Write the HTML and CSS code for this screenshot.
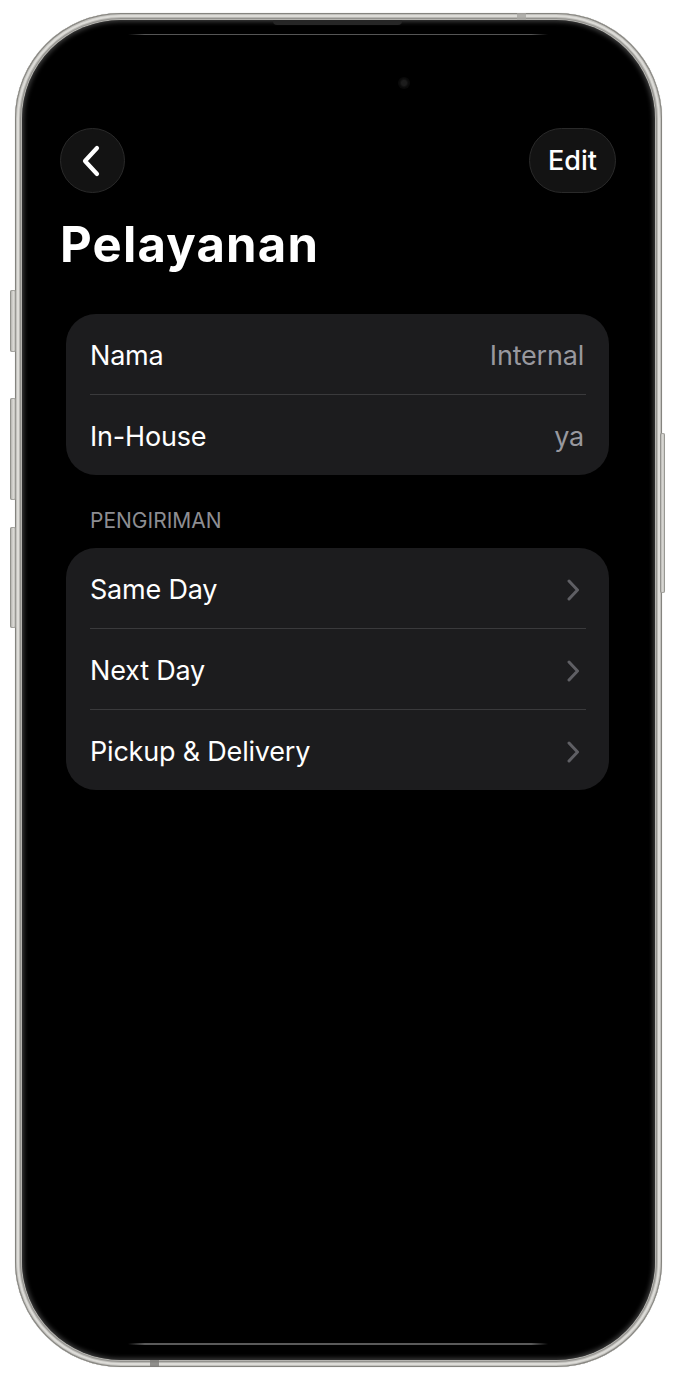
FILE: index.html
```html
<!DOCTYPE html>
<html lang="id">
<head>
<meta charset="utf-8">
<title>Pelayanan</title>
<link rel="stylesheet" href="styles.css">
</head>
<body>
<div class="phone">
  <span class="btn-side btn-action"></span>
  <span class="btn-side btn-vol-up"></span>
  <span class="btn-side btn-vol-down"></span>
  <span class="btn-side btn-power"></span>
  <span class="notch"></span>
  <span class="band band-top"></span>
  <span class="band band-bottom"></span>
  <div class="screen">
    <span class="edge-line edge-top"></span>
    <span class="edge-line edge-bottom"></span>
    <span class="camera"></span>
    <nav class="nav">
      <button class="nav-btn back" aria-label="Kembali">
        <svg width="20" height="32" viewBox="0 0 20 32"><path d="M16 3 L4 16 L16 29" fill="none" stroke="#fff" stroke-width="4.2" stroke-linecap="round" stroke-linejoin="round"/></svg>
      </button>
      <button class="nav-btn edit">Edit</button>
    </nav>
    <h1 class="title">Pelayanan</h1>
    <section class="card">
      <div class="row"><span class="label">Nama</span><span class="value">Internal</span></div>
      <div class="row"><span class="label">In-House</span><span class="value">ya</span></div>
    </section>
    <h2 class="section-header">PENGIRIMAN</h2>
    <section class="card">
      <div class="row"><span class="label">Same Day</span><svg class="chev" width="14" height="22" viewBox="0 0 14 22"><path d="M3 2 L11.5 11 L3 20" fill="none" stroke="#5f5f64" stroke-width="3" stroke-linecap="round" stroke-linejoin="round"/></svg></div>
      <div class="row"><span class="label">Next Day</span><svg class="chev" width="14" height="22" viewBox="0 0 14 22"><path d="M3 2 L11.5 11 L3 20" fill="none" stroke="#5f5f64" stroke-width="3" stroke-linecap="round" stroke-linejoin="round"/></svg></div>
      <div class="row"><span class="label">Pickup &amp; Delivery</span><svg class="chev" width="14" height="22" viewBox="0 0 14 22"><path d="M3 2 L11.5 11 L3 20" fill="none" stroke="#5f5f64" stroke-width="3" stroke-linecap="round" stroke-linejoin="round"/></svg></div>
    </section>
  </div>
</div>
</body>
</html>
```
FILE: styles.css
```css
html, body {
  margin: 0;
  padding: 0;
  background: #ffffff;
}
body {
  width: 675px;
  height: 1380px;
  overflow: hidden;
  font-family: Inter, "Noto Sans", "Liberation Sans", sans-serif;
}
.phone {
  position: relative;
  box-sizing: border-box;
  margin: 13px 0 0 15px;
  width: 647px;
  height: 1354px;
  padding: 7px;
  border-radius: 106px;
  background: #b4b3af;
  box-shadow:
    inset 0 0 0 1px #85847f,
    inset 0 0 0 2px #c2c1bd,
    inset 0 0 0 4px #dddcd8,
    inset 0 0 0 5px #bab9b5,
    inset 0 0 0 6px #93928e,
    0 0 1px rgba(0,0,0,0.3);
}
.btn-side {
  position: absolute;
  width: 6px;
  background: linear-gradient(90deg, #a3a29e, #dcdbd7 55%, #afaeaa);
  border-radius: 2px;
  box-shadow: inset 0 0 0 1px rgba(125,125,120,0.55);
}
.btn-action { left: -5px; top: 277px; height: 62px; }
.btn-vol-up { left: -5px; top: 385px; height: 102px; }
.btn-vol-down { left: -5px; top: 514px; height: 101px; }
.btn-power { right: -3px; top: 420px; height: 160px; width: 5px; }
.notch {
  position: absolute;
  left: 258px;
  top: 7px;
  width: 129px;
  height: 5px;
  border-radius: 0 0 4px 4px;
  background: #262626;
  z-index: 2;
}
.band {
  position: absolute;
  width: 9px;
  height: 7px;
  background: #a6a5a1;
  opacity: 0.8;
}
.band-top { left: 502px; top: 0; }
.band-bottom { left: 135px; bottom: 0; background: #7d7c79; }
.screen {
  position: relative;
  box-sizing: border-box;
  height: 100%;
  border-radius: 99px;
  background: #000;
  box-shadow: inset 0 0 4px 2px rgba(95,95,95,0.6);
  padding-top: 108px;
  display: flex;
  flex-direction: column;
}
.edge-line {
  position: absolute;
  left: 106px;
  width: 420px;
  height: 1px;
  background: linear-gradient(90deg, rgba(90,90,90,0), #555 4%, #555 96%, rgba(90,90,90,0));
}
.edge-top { top: 14px; }
.edge-bottom { top: 1323px; height: 2px; background: linear-gradient(90deg, rgba(90,90,90,0), #5a5a5a 4%, #5a5a5a 96%, rgba(90,90,90,0)); }
.camera {
  position: absolute;
  left: 377px;
  top: 58px;
  width: 10px;
  height: 10px;
  border-radius: 50%;
  background: radial-gradient(circle at 50% 50%, #1c1c1c 0 35%, #0c0c0c 60%, #161616 100%);
  box-shadow: 0 0 0 1px #0a0a0a;
}
.nav {
  display: flex;
  justify-content: space-between;
  align-items: center;
  padding: 0 39px 0 38px;
  height: 65px;
}
.nav-btn {
  box-sizing: border-box;
  height: 65px;
  border-radius: 33px;
  background: #131313;
  border: 1px solid #2a2a2a;
  color: #fff;
  font-family: Inter, "Noto Sans", sans-serif;
  padding: 0;
  display: flex;
  align-items: center;
  justify-content: center;
}
.back {
  width: 65px;
}
.back svg { margin-left: -3px; }
.edit {
  width: 87px;
  font-size: 27px;
  font-weight: 500;
}
.title {
  margin: 24px 0 0 38px;
  font-size: 49px;
  line-height: 56px;
  font-weight: 700;
  color: #fff;
  letter-spacing: 1.2px;
}
.card {
  margin: 41px 46px 0 44px;
  background: #1c1c1e;
  border-radius: 30px;
}
.row {
  box-sizing: border-box;
  height: 81px;
  margin: 0 23px 0 24px;
  padding-top: 3px;
  border-bottom: 1px solid #3a3a3c;
  display: flex;
  align-items: center;
  justify-content: space-between;
}
.row:last-child {
  border-bottom: none;
  height: 80px;
}
.label {
  color: #fff;
  font-size: 27px;
  letter-spacing: -0.2px;
}
.value {
  color: #98989e;
  font-size: 27px;
  letter-spacing: -0.2px;
  padding-right: 2px;
}
.chev {
  margin-right: 6px;
}
.section-header {
  margin: 33px 0 0 68px;
  font-size: 21px;
  line-height: 26px;
  font-weight: 400;
  color: #8d8d92;
  letter-spacing: 0;
}
.card + .section-header + .card {
  margin-top: 14px;
}
```
